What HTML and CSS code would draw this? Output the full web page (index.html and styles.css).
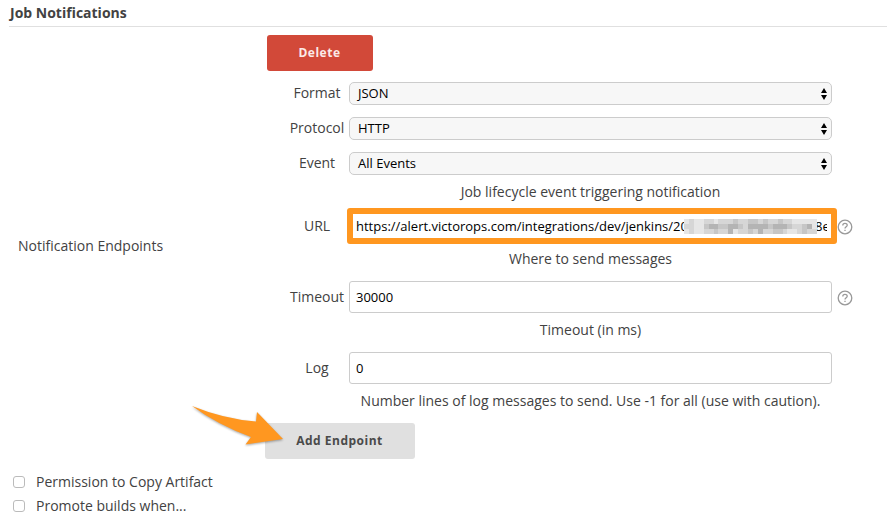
FILE: index.html
```html
<!DOCTYPE html>
<html lang="en">
<head>
<meta charset="utf-8">
<title>Job Notifications</title>
<link rel="stylesheet" href="styles.css">
</head>
<body>
<h1 class="section-title">Job Notifications</h1>
<main class="section">
  <div class="section-label">Notification Endpoints</div>
  <div class="endpoint">
    <button class="btn btn-delete">Delete</button>
    <div class="row row-select"><label>Format</label><div class="select"><span>JSON</span><svg viewBox="0 0 6 12"><path d="M0 5L3 0L6 5ZM0 7H6L3 12Z"/></svg></div></div>
    <div class="row row-select"><label>Protocol</label><div class="select"><span>HTTP</span><svg viewBox="0 0 6 12"><path d="M0 5L3 0L6 5ZM0 7H6L3 12Z"/></svg></div></div>
    <div class="row row-select"><label>Event</label><div class="select"><span>All Events</span><svg viewBox="0 0 6 12"><path d="M0 5L3 0L6 5ZM0 7H6L3 12Z"/></svg></div></div>
    <p class="hint">Job lifecycle event triggering notification</p>
    <div class="row row-input"><label>URL</label><div class="input highlighted"><span class="url">https://alert.victorops.com/integrations/dev/jenkins/20</span><svg class="mosaic" viewBox="0 0 135 15" shape-rendering="crispEdges">
      <path class="m0" d="M0 2.500H135M0 7.500H135M0 12.500H135"/>
      <path class="m1" d="M5 2.500h5M20 2.500h10M35 2.500h15M55 2.500h10M75 2.500h5M85 2.500h10M100 2.500h10M0 7.500h10M60 7.500h5M110 7.500h10M5 12.500h5M20 12.500h25M55 12.500h20M80 12.500h25M115 12.500h20"/>
      <path class="m2" d="M50 2.500h5M65 2.500h10M80 2.500h5M95 2.500h5M20 7.500h5M35 7.500h10M55 7.500h5M85 7.500h5M105 7.500h5M120 7.500h5M30 12.500h5M65 12.500h5M90 12.500h10M120 12.500h5"/>
      <path class="m3" d="M25 7.500h10M45 7.500h10M65 7.500h20M90 7.500h15M125 7.500h5M45 12.500h5M75 12.500h5"/>
    </svg><span class="tail">8e</span></div><svg class="help" viewBox="0 0 16 16"><circle cx="8" cy="8" r="6.8"/><path d="M5.800 6.400C5.800 3.600 10.200 3.700 10.200 6.200C10.200 7.700 8 7.700 8 9.500M8 10.800V12"/></svg></div>
    <p class="hint hint-input">Where to send messages</p>
    <div class="row row-input"><label>Timeout</label><div class="input">30000</div><svg class="help" viewBox="0 0 16 16"><circle cx="8" cy="8" r="6.8"/><path d="M5.800 6.400C5.800 3.600 10.200 3.700 10.200 6.200C10.200 7.700 8 7.700 8 9.500M8 10.800V12"/></svg></div>
    <p class="hint hint-input">Timeout (in ms)</p>
    <div class="row row-input"><label>Log</label><div class="input">0</div></div>
    <p class="hint hint-input">Number lines of log messages to send. Use -1 for all (use with caution).</p>
    <div class="add"><button class="btn btn-add">Add Endpoint</button>
      <svg class="arrow" viewBox="0 0 100 50"><path d="M2 6Q34 19 66 21.500L67 12L93 39L55.500 44.500L61 37Q28 25 2 6Z"/></svg>
    </div>
  </div>
</main>
<div class="check"><i class="box"></i><span>Permission to Copy Artifact</span></div>
<div class="check"><i class="box"></i><span>Promote builds when...</span></div>
</body>
</html>
```
FILE: styles.css
```css
* { box-sizing: border-box; }
body { margin: 0; height: 529px; overflow: hidden; background: #fff; color: #424242; font: 14px/20px "Open Sans", sans-serif; }
.section-title { margin: 0 0 0 9px; height: 27px; padding: 3px 0 0 1px; border-bottom: 1px solid #e0e0e0; font-size: 14px; line-height: 20px; font-weight: 700; }
.section { display: grid; grid-template-columns: 247px 622px; padding: 8px 0 0 18px; height: 443px; }
.section-label { padding-top: 201px; }
.endpoint { display: flex; flex-direction: column; align-items: flex-start; }
.btn { border: 0; border-radius: 3px; height: 36px; padding: 0 0 1px; font: 700 12px/20px "Open Sans", sans-serif; letter-spacing: .5px; }
.btn-delete { width: 106px; margin: 0 0 11px 2px; padding-right: 1px; background: #d24939; color: #fbe9e7; }
.row { display: grid; grid-template-columns: 57px 483px 16px; column-gap: 4px; margin-left: 23px; align-items: center; }
.row label { text-align: center; padding-left: 1px; }
.row-select { height: 23px; margin-bottom: 12px; }
.row-select label { padding-bottom: 1px; }
.select { display: flex; align-items: center; justify-content: space-between; height: 23px; padding: 0 4px 0 8px; border: 1px solid #ccc; border-radius: 5px; background: #f7f7f7; color: #000; font-size: 13px; }
.select span { padding-bottom: 1px; }
.select svg { width: 6px; height: 12px; }
.hint { margin: -5px 0 8px 84px; width: 483px; height: 20px; text-align: center; }
.hint-input { margin-bottom: 12px; }
.row-input { height: 32px; margin-bottom: 12px; grid-template-rows: 32px; }
.input { display: flex; align-items: center; height: 32px; padding: 0 6px; border: 1px solid #ccc; border-radius: 3px; color: #000; font-size: 13px; white-space: nowrap; }
.highlighted { height: 36px; margin: -2px -5px -2px -2px; padding: 0 3px; border: 6px solid #ff9720; }
.url { flex: none; }
.mosaic { flex: none; position: relative; width: 133px; height: 15px; margin: 0 0 0 -4px; fill: none; stroke-width: 5; }
.m0 { stroke: #e6e6e6; }
.m1 { stroke: #d6d6d6; }
.m2 { stroke: #c6c6c6; }
.m3 { stroke: #b4b4b4; }
.tail { width: 12px; margin-left: -2px; overflow: hidden; }
.highlighted .tail { flex: none; }
.help { width: 16px; height: 16px; fill: none; stroke: #999; stroke-width: 1.3; margin: 1px 0 0 1px; }
.add { position: relative; }
.btn-add { width: 150px; padding-right: 1px; background: #e0e0e0; color: #4a4a4a; }
.arrow { position: absolute; left: -75px; top: -23px; width: 100px; height: 50px; fill: #ff9720; filter: drop-shadow(0 1px 1px rgba(0, 0, 0, .35)); }
.check { display: flex; align-items: center; height: 24px; padding-left: 13px; gap: 11px; }
.box { width: 12px; height: 12px; border: 1px solid #bbb; border-radius: 3px; }
```
